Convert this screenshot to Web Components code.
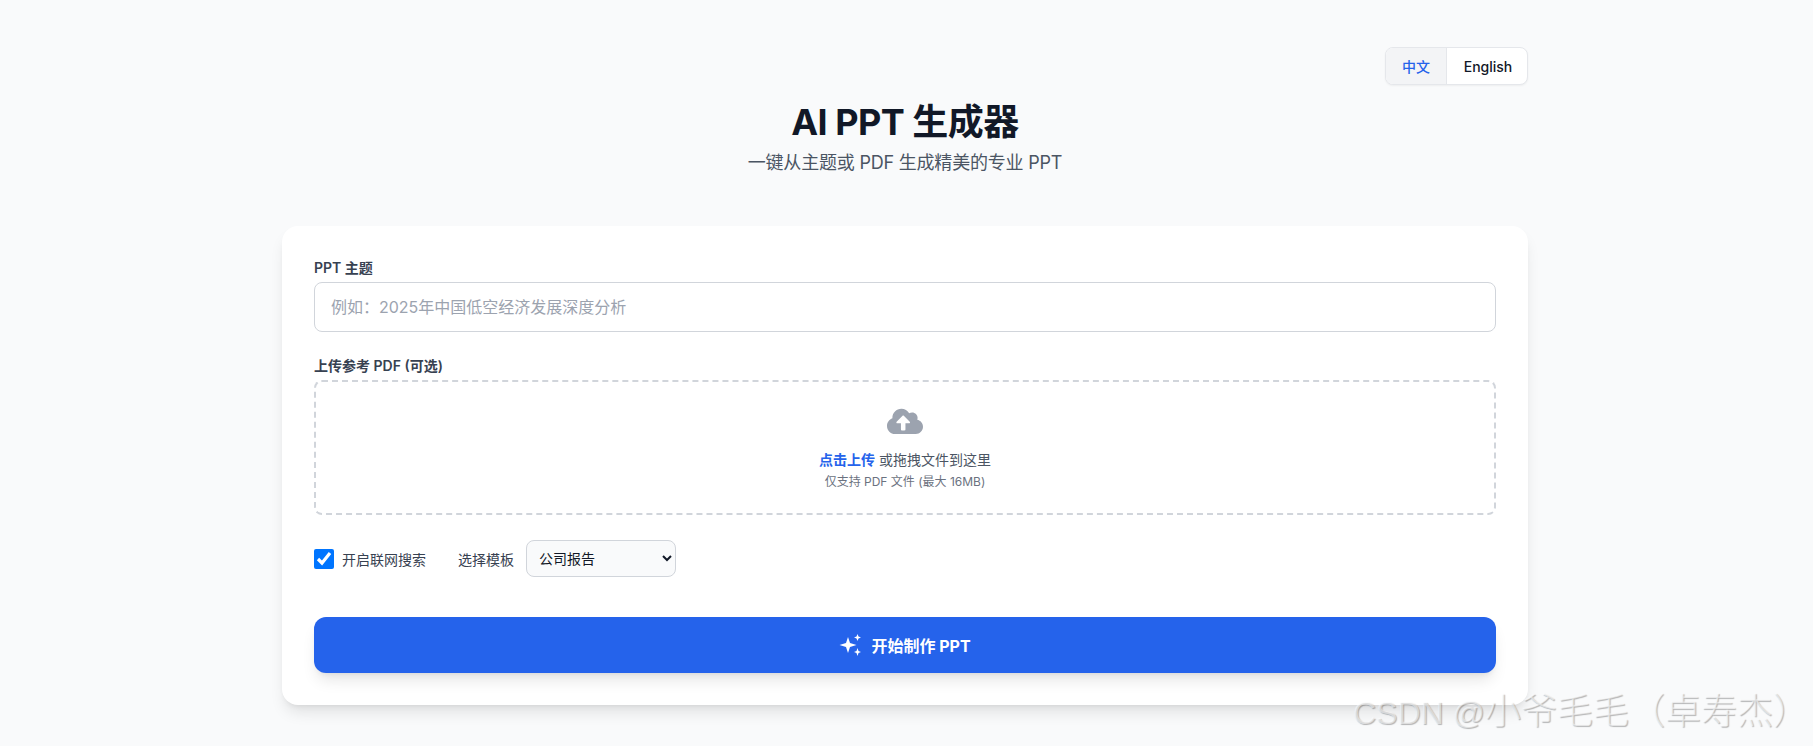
<!DOCTYPE html>
<html lang="zh">
<head>
<meta charset="utf-8">
<title>AI PPT 生成器</title>
<style>
	html, body {
		margin: 0;
		height: 100%;
	}

	body {
		background-color: #F9FAFB;
		font-family: Inter, "Noto Sans CJK SC", sans-serif;
		color: #111827;
		overflow: hidden;
	}
</style>
</head>
<body>
<ppt-app>
	<lang-switch slot="lang"></lang-switch>
	<app-header slot="header" heading="AI PPT 生成器" sub="一键从主题或 PDF 生成精美的专业 PPT"></app-header>
	<ppt-form slot="form"></ppt-form>
</ppt-app>
<water-mark>CSDN @<span style="font-size: 36px">小爷毛毛（卓寿杰）</span></water-mark>

<script>
class PptApp extends HTMLElement {
	connectedCallback() {
		const root = this.attachShadow({ mode: "open" });
		root.innerHTML = `
			<style>
				:host {
					display: block;
					padding: 47px 3px 0 0;
				}
				.wrap {
					width: 1246px;
					margin: 0 auto;
					display: flex;
					flex-flow: column nowrap;
				}
				.top {
					display: flex;
					justify-content: flex-end;
				}
			</style>
			<div class="wrap">
				<div class="top"><slot name="lang"></slot></div>
				<slot name="header"></slot>
				<slot name="form"></slot>
			</div>
		`;
	}
}

class LangSwitch extends HTMLElement {
	connectedCallback() {
		const root = this.attachShadow({ mode: "open" });
		root.innerHTML = `
			<style>
				:host {
					display: flex;
					width: 143px;
					height: 38px;
					box-sizing: border-box;
					border: 1px solid #E5E7EB;
					border-radius: 8px;
					background-color: #FFFFFF;
					box-shadow: 0 1px 2px rgba(0,0,0,.05);
					overflow: hidden;
				}
				a {
					display: flex;
					align-items: center;
					justify-content: center;
					font-size: 14px;
					font-weight: 500;
					color: #111827;
				}
				.on {
					width: 60px;
					color: #2563EB;
					background-color: #F3F4F6;
					border-right: 1px solid #E5E7EB;
				}
				.off {
					flex: 1;
					padding-left: 2px;
				}
			</style>
			<a class="on">中文</a>
			<a class="off">English</a>
		`;
	}
}

class AppHeader extends HTMLElement {
	connectedCallback() {
		const root = this.attachShadow({ mode: "open" });
		root.innerHTML = `
			<style>
				:host {
					display: block;
					text-align: center;
					margin-top: 17px;
					margin-bottom: 49px;
				}
				h1 {
					margin: 0;
					font-size: 36px;
					line-height: 40px;
					font-weight: 700;
					letter-spacing: -0.5px;
					color: #111827;
				}
				p {
					margin: 7px 0 0;
					font-size: 18px;
					line-height: 28px;
					letter-spacing: -0.2px;
					color: #4B5563;
				}
			</style>
			<h1>${this.getAttribute("heading")}</h1>
			<p>${this.getAttribute("sub")}</p>
		`;
	}
}

class PptForm extends HTMLElement {
	connectedCallback() {
		const root = this.attachShadow({ mode: "open" });
		root.innerHTML = `
			<style>
				:host {
					display: block;
					box-sizing: border-box;
					padding: 32px;
					background-color: #FFFFFF;
					border-radius: 16px;
					box-shadow: 0 10px 15px -3px rgba(0,0,0,.1), 0 4px 6px -4px rgba(0,0,0,.1);
				}
				label {
					display: block;
					font-size: 14px;
					line-height: 20px;
					font-weight: 600;
					color: #374151;
					margin-bottom: 4px;
				}
				.field {
					margin-bottom: 24px;
				}
				.field + .field {
					margin-bottom: 25px;
				}
				input[type=text] {
					display: block;
					width: 100%;
					height: 50px;
					box-sizing: border-box;
					padding: 0 16px;
					font: inherit;
					font-size: 16px;
					color: #111827;
					border: 1px solid #D1D5DB;
					border-radius: 8px;
					outline: none;
				}
				input::placeholder {
					color: #9CA3AF;
				}
			</style>
			<div class="field">
				<label>PPT 主题</label>
				<input type="text" placeholder="例如：2025年中国低空经济发展深度分析">
			</div>
			<div class="field">
				<label>上传参考 PDF (可选)</label>
				<upload-zone></upload-zone>
			</div>
			<form-options></form-options>
			<submit-button>开始制作 PPT</submit-button>
		`;
	}
}

class UploadZone extends HTMLElement {
	connectedCallback() {
		const root = this.attachShadow({ mode: "open" });
		root.innerHTML = `
			<style>
				:host {
					display: flex;
					flex-flow: column nowrap;
					align-items: center;
					box-sizing: border-box;
					height: 135px;
					padding-top: 25px;
					border: 2px dashed #D1D5DB;
					border-radius: 8px;
				}
				svg {
					width: 36px;
					height: 28.8px;
					fill: #9CA3AF;
				}
				.main {
					margin-top: 14px;
					font-size: 14px;
					line-height: 20px;
					color: #4B5563;
				}
				.main b {
					font-weight: 600;
					color: #2563EB;
				}
				.hint {
					margin-top: 4px;
					font-size: 12px;
					line-height: 16px;
					color: #6B7280;
				}
			</style>
			<svg viewBox="0 0 640 512"><path d="M537.6 226.6c4.100-10.700 6.400-22.400 6.400-34.600 0-53-43-96-96-96-19.700 0-38.100 6-53.300 16.200C367 64.200 315.300 32 256 32c-88.400 0-160 71.600-160 160 0 2.700.1 5.400.2 8.100C40.200 219.800 0 273.200 0 336c0 79.500 64.500 144 144 144h368c70.700 0 128-57.300 128-128 0-61.900-44-113.600-102.400-125.400zM393.400 288H328v112c0 8.800-7.200 16-16 16h-48c-8.800 0-16-7.200-16-16V288h-65.400c-14.300 0-21.400-17.200-11.300-27.300l105.400-105.400c6.200-6.200 16.400-6.200 22.600 0l105.400 105.400c10.100 10.100 2.900 27.300-11.300 27.300z"/></svg>
			<div class="main"><b>点击上传</b> 或拖拽文件到这里</div>
			<div class="hint">仅支持 PDF 文件 (最大 16MB)</div>
		`;
	}
}

class FormOptions extends HTMLElement {
	connectedCallback() {
		const root = this.attachShadow({ mode: "open" });
		root.innerHTML = `
			<style>
				:host {
					display: flex;
					align-items: center;
					height: 37px;
					margin-bottom: 40px;
					font-size: 14px;
					color: #374151;
				}
				input {
					width: 20px;
					height: 20px;
					margin: 0 8px 0 0;
					accent-color: #0075FF;
				}
				.tpl {
					margin-left: 32px;
					margin-right: 12px;
				}
				select {
					width: 150px;
					height: 37px;
					box-sizing: border-box;
					padding: 0 8px;
					font: inherit;
					color: #111827;
					background-color: #F9FAFB;
					border: 1px solid #D1D5DB;
					border-radius: 8px;
				}
			</style>
			<input type="checkbox" checked>
			<span>开启联网搜索</span>
			<span class="tpl">选择模板</span>
			<select>
				<option>公司报告</option>
			</select>
		`;
	}
}

class SubmitButton extends HTMLElement {
	connectedCallback() {
		const root = this.attachShadow({ mode: "open" });
		root.innerHTML = `
			<style>
				:host {
					display: flex;
					align-items: center;
					justify-content: center;
					gap: 8px;
					height: 56px;
					background-color: #2563EB;
					color: #FFFFFF;
					border-radius: 12px;
					font-size: 16px;
					font-weight: 700;
					box-shadow: 0 10px 15px -3px rgba(0,0,0,.1), 0 4px 6px -4px rgba(0,0,0,.1);
				}
				svg {
					width: 24px;
					height: 24px;
					fill: #FFFFFF;
				}
			</style>
			<svg viewBox="0 0 24 24">
				<path d="M9 4l2 6 6.500 2-6.500 2-2 6-2-6-6.500-2 6.500-2z"/>
				<path d="M18.500 1l1 2.500 2.500 1-2.500 1-1 2.500-1-2.500-2.500-1 2.500-1z"/>
				<path d="M18.500 15l1 3 2.500 1-2.500 1-1 3-1-3-2.500-1 2.500-1z"/>
			</svg>
			<slot></slot>
		`;
	}
}

class WaterMark extends HTMLElement {
	connectedCallback() {
		const root = this.attachShadow({ mode: "open" });
		root.innerHTML = `
			<style>
				:host {
					position: absolute;
					left: 1353px;
					top: 692px;
					font-family: "Liberation Sans", "Noto Sans CJK SC", sans-serif;
					font-size: 32px;
					line-height: 40px;
					font-weight: 300;
					white-space: nowrap;
					color: rgba(255,255,255,.55);
					text-shadow: 1px 1px 1px rgba(0,0,0,.28);
				}
			</style>
			<slot></slot>
		`;
	}
}

customElements.define("ppt-app", PptApp);
customElements.define("lang-switch", LangSwitch);
customElements.define("app-header", AppHeader);
customElements.define("ppt-form", PptForm);
customElements.define("upload-zone", UploadZone);
customElements.define("form-options", FormOptions);
customElements.define("submit-button", SubmitButton);
customElements.define("water-mark", WaterMark);
</script>
</body>
</html>
